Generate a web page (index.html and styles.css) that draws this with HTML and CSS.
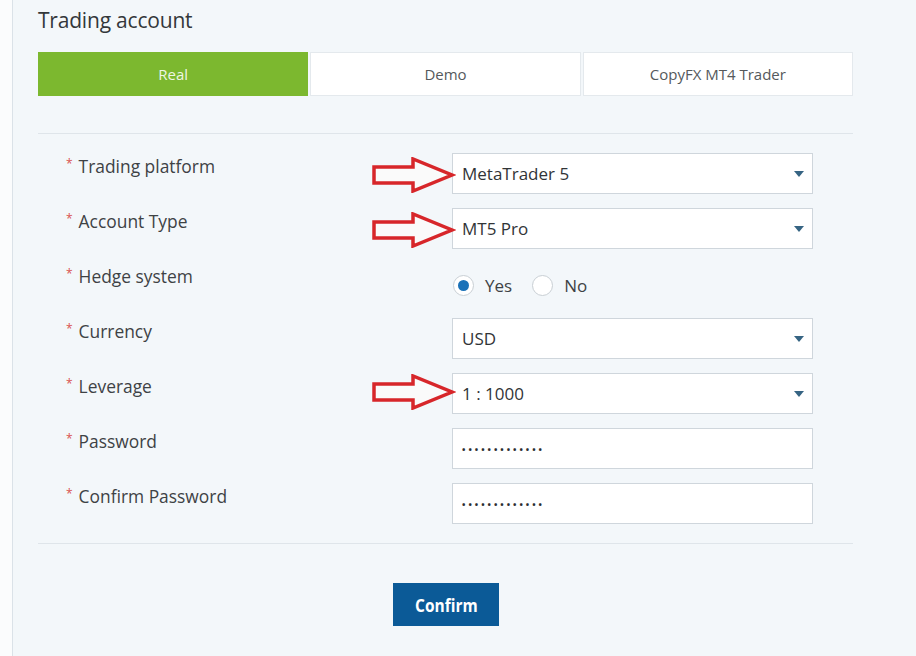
FILE: index.html
```html
<!DOCTYPE html>
<html>
<head>
<meta charset="utf-8">
<link rel="stylesheet" href="styles.css">
</head>
<body>
<div class="page">
  <div class="panel">
    <h1 class="title">Trading account</h1>
    <div class="tabs">
      <div class="tab tab-active">Real</div>
      <div class="tab">Demo</div>
      <div class="tab">CopyFX MT4 Trader</div>
    </div>
    <div class="form">
      <div class="row">
        <div class="label"><span class="req">*</span>Trading platform</div>
        <div class="control">
          <svg class="arrow" viewBox="0 0 84 36" width="84" height="36"><polygon points="2,10 41,10 41,2 80,18 41,34 41,26 2,26" /></svg>
          <div class="select"><span class="value">MetaTrader 5</span><span class="caret"></span></div>
        </div>
      </div>
      <div class="row">
        <div class="label"><span class="req">*</span>Account Type</div>
        <div class="control">
          <svg class="arrow" viewBox="0 0 84 36" width="84" height="36"><polygon points="2,10 41,10 41,2 80,18 41,34 41,26 2,26" /></svg>
          <div class="select"><span class="value">MT5 Pro</span><span class="caret"></span></div>
        </div>
      </div>
      <div class="row">
        <div class="label"><span class="req">*</span>Hedge system</div>
        <div class="control radios">
          <span class="radio radio-on"></span><span class="radio-text">Yes</span>
          <span class="radio"></span><span class="radio-text">No</span>
        </div>
      </div>
      <div class="row">
        <div class="label"><span class="req">*</span>Currency</div>
        <div class="control">
          <div class="select"><span class="value">USD</span><span class="caret"></span></div>
        </div>
      </div>
      <div class="row">
        <div class="label"><span class="req">*</span>Leverage</div>
        <div class="control">
          <svg class="arrow arrow-low" viewBox="0 0 84 36" width="84" height="36"><polygon points="2,10 41,10 41,2 80,18 41,34 41,26 2,26" /></svg>
          <div class="select"><span class="value">1 : 1000</span><span class="caret"></span></div>
        </div>
      </div>
      <div class="row">
        <div class="label"><span class="req">*</span>Password</div>
        <div class="control">
          <div class="select"><span class="dots">•••••••••••••</span></div>
        </div>
      </div>
      <div class="row">
        <div class="label"><span class="req">*</span>Confirm Password</div>
        <div class="control">
          <div class="select"><span class="dots">•••••••••••••</span></div>
        </div>
      </div>
    </div>
    <div class="actions">
      <button class="btn"><span class="btn-text">Confirm</span></button>
    </div>
  </div>
</div>
</body>
</html>
```

FILE: styles.css
```css
html, body {
  margin: 0;
  padding: 0;
  background: #fbfcfd;
}
.page {
  height: 656px;
  padding-left: 12px;
  overflow: hidden;
}
.panel {
  height: 656px;
  background: #f3f7fa;
  border-left: 1px solid #dbe2e8;
  padding: 0 0 0 25px;
  box-sizing: border-box;
  width: 904px;
  font-family: "Open Sans", "Noto Sans", sans-serif;
  color: #3c3f42;
}
.title {
  margin: 0;
  padding-top: 6px;
  height: 52px;
  box-sizing: border-box;
  font-size: 21px;
  font-weight: 500;
  line-height: 28px;
  color: #33373a;
  letter-spacing: -0.2px;
}
.tabs {
  display: flex;
  gap: 2px;
  width: 815px;
  height: 44px;
}
.tab {
  flex: 1;
  background: #fff;
  border: 1px solid #e4e9ed;
  display: flex;
  align-items: center;
  justify-content: center;
  font-size: 15px;
  color: #55595c;
  box-sizing: border-box;
}
.tab-active {
  background: #7cb82f;
  border-color: #7cb82f;
  color: #eef6e4;
}
.form {
  margin-top: 37px;
  width: 815px;
  border-top: 1px solid #dfe5ea;
  border-bottom: 1px solid #dfe5ea;
  padding: 19px 0 19px 0;
  display: flex;
  flex-direction: column;
  gap: 14px;
}
.row {
  display: flex;
  height: 41px;
}
.label {
  width: 414px;
  padding-left: 28px;
  box-sizing: border-box;
  font-size: 17.4px;
  line-height: 26px;
  color: #3e4245;
  margin-top: -2px;
}
.req {
  color: #d9534f;
  font-size: 12px;
  vertical-align: 5px;
  margin-right: 6px;
}
.control {
  position: relative;
  width: 361px;
}
.select {
  height: 41px;
  background: #fff;
  border: 1px solid #cfd6dc;
  box-sizing: border-box;
  display: flex;
  align-items: center;
  padding: 0 8px 0 9px;
}
.value {
  flex: 1;
  font-size: 17px;
  font-weight: 500;
  color: #313437;
}
.caret {
  width: 0;
  height: 0;
  border-left: 5px solid transparent;
  border-right: 5px solid transparent;
  border-top: 6px solid #366483;
}
.dots {
  font-size: 9px;
  font-weight: 700;
  letter-spacing: 3px;
  color: #2a2d30;
  padding-top: 2px;
}
.arrow {
  position: absolute;
  left: -80px;
  top: 4px;
}
.arrow-low {
  top: 1px;
}
.arrow polygon {
  fill: #fafafa;
  stroke: #d7262a;
  stroke-width: 3.5;
  stroke-linejoin: miter;
}
.radios {
  display: flex;
  align-items: center;
  padding-top: 3px;
}
.radio {
  width: 21px;
  height: 21px;
  border-radius: 50%;
  border: 1px solid #c9cfd4;
  background: #fff;
  box-sizing: border-box;
  display: inline-flex;
  align-items: center;
  justify-content: center;
  margin-left: 1px;
}
.radio-on::after {
  content: "";
  width: 11px;
  height: 11px;
  border-radius: 50%;
  background: #1b72b8;
}
.radio-text {
  font-size: 17px;
  color: #3e4245;
  margin-left: 11px;
  margin-right: 19px;
}
.actions {
  width: 815px;
  padding-top: 39px;
  display: flex;
  justify-content: center;
}
.btn {
  width: 106px;
  height: 43px;
  background: #0b5a97;
  color: #fff;
  border: none;
  font-family: "Open Sans", sans-serif;
  font-weight: 700;
  font-size: 18px;
  padding: 0;
  margin-left: 1px;
}
.btn-text {
  display: inline-block;
  transform: scaleX(0.86);
}
```
